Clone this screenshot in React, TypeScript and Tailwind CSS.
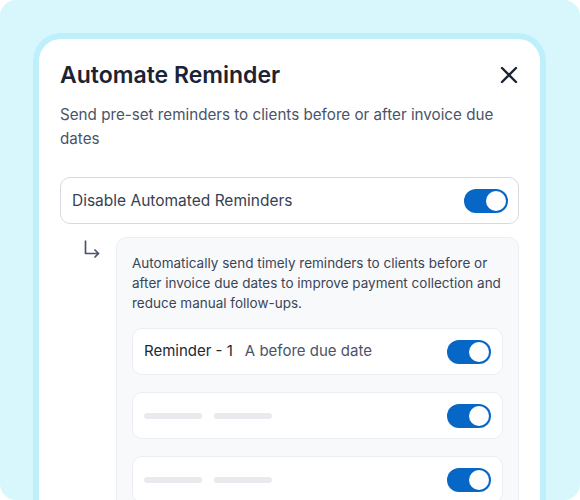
const Toggle = () => (
  <div className="flex h-6 w-11 shrink-0 items-center justify-end rounded-full bg-[#0767c6] p-[2px]">
    <div className="h-5 w-5 rounded-full bg-white" />
  </div>
);

const SkeletonRow = () => (
  <div className="flex h-[47px] items-center justify-between rounded-[10px] border border-[#eceef2] bg-white pl-[11px] pr-[11px]">
    <div className="flex gap-3">
      <div className="h-[6px] w-[58px] rounded-full bg-[#e8eaee]" />
      <div className="h-[6px] w-[58px] rounded-full bg-[#e8eaee]" />
    </div>
    <Toggle />
  </div>
);

export default function App() {
  return (
    <div className="h-[500px] w-[580px] bg-white" style={{ fontFamily: "Inter, 'Noto Sans', sans-serif" }}>
      <div className="h-full overflow-hidden rounded-2xl bg-[#d8f7fd] pl-[33px] pt-[33px]">
        <div className="w-[513px] rounded-[28px] border-[6px] border-[#bef0fb] bg-white px-[21px] pt-5 pb-10">
          <div className="flex items-center justify-between">
            <h1 className="text-[23px] leading-8 font-semibold text-[#1b2335]">Automate Reminder</h1>
            <svg width="20" height="20" viewBox="0 0 20 20" className="text-[#1b2335]">
              <path d="M3 3L17 17M17 3L3 17" stroke="currentColor" strokeWidth="2.4" strokeLinecap="round" />
            </svg>
          </div>

          <p className="mt-3 text-[15.2px] leading-6 text-[#4a5468]">
            Send pre-set reminders to clients before or after invoice due dates
          </p>

          <div className="mt-[26px] flex h-[47px] items-center justify-between rounded-[10px] border border-[#d5dae1] pl-[11px] pr-[10px]">
            <span className="text-[15.5px] text-[#374152]">Disable Automated Reminders</span>
            <Toggle />
          </div>

          <div className="mt-[13px] flex">
            <div className="w-[56px] shrink-0 pl-[24px] pt-[3px]">
              <svg width="16" height="18" viewBox="0 0 16 18" fill="none" className="text-[#4a5468]">
                <path d="M1.5 0.5V13.5H14.5" stroke="currentColor" strokeWidth="1.7" strokeLinejoin="round" />
                <path d="M11 10L14.5 13.5L11 17" stroke="currentColor" strokeWidth="1.7" strokeLinecap="round" strokeLinejoin="round" />
              </svg>
            </div>

            <div className="flex-1 rounded-[10px] border border-[#eceef2] bg-[#f8f9fb] px-[15px] pt-[15px] pb-6">
              <p className="text-[13.5px] leading-5 text-[#3b4557]">
                Automatically send timely reminders to clients before or after invoice due dates to improve payment
                collection and reduce manual follow-ups.
              </p>

              <div className="mt-[15px] flex flex-col gap-[17px]">
                <div className="flex h-[47px] items-center justify-between rounded-[10px] border border-[#eceef2] bg-white pl-[11px] pr-[11px]">
                  <div className="flex items-center gap-[12px] text-[15px]">
                    <span className="text-[#1f2735]">Reminder - 1</span>
                    <span className="text-[#4a5468]">A before due date</span>
                  </div>
                  <Toggle />
                </div>
                <SkeletonRow />
                <SkeletonRow />
              </div>
            </div>
          </div>
        </div>
      </div>
    </div>
  );
}
